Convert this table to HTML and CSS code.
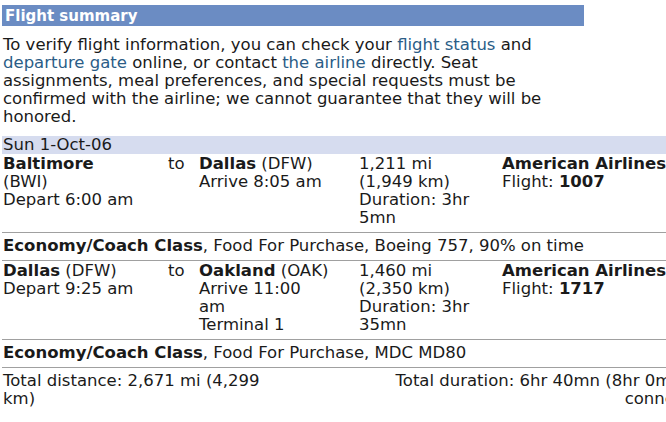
FILE: index.html
```html
<!DOCTYPE html>
<html>
<head>
<meta charset="utf-8">
<link rel="stylesheet" href="styles.css">
</head>
<body>
<div class="page">
  <h2 class="title">Flight summary</h2>
  <p class="intro">To verify flight information, you can check your <a href="#">flight status</a> and <a href="#">departure gate</a> online, or contact <a href="#">the airline</a> directly. Seat assignments, meal preferences, and special requests must be confirmed with the airline; we cannot guarantee that they will be honored.</p>
  <table class="flights">
    <colgroup>
      <col class="c-from"><col class="c-to"><col class="c-dest"><col class="c-dist"><col class="c-air">
    </colgroup>
    <tr class="date"><td colspan="5">Sun 1-Oct-06</td></tr>
    <tr class="leg">
      <td class="from"><b>Baltimore</b> (BWI)<br>Depart 6:00 am</td>
      <td class="to">to</td>
      <td class="dest"><b>Dallas</b> (DFW)<br>Arrive 8:05 am</td>
      <td class="dist">1,211 mi (1,949 km)<br>Duration: 3hr 5mn</td>
      <td class="air"><b>American Airlines</b><br>Flight: <b>1007</b></td>
    </tr>
    <tr class="info"><td colspan="5"><b>Economy/Coach Class</b>, Food For Purchase, Boeing 757, 90% on time</td></tr>
    <tr class="leg">
      <td class="from"><b>Dallas</b> (DFW)<br>Depart 9:25 am</td>
      <td class="to">to</td>
      <td class="dest"><b>Oakland</b> (OAK)<br>Arrive 11:00 am<br>Terminal 1</td>
      <td class="dist">1,460 mi (2,350 km)<br>Duration: 3hr 35mn</td>
      <td class="air"><b>American Airlines</b><br>Flight: <b>1717</b></td>
    </tr>
    <tr class="info"><td colspan="5"><b>Economy/Coach Class</b>, Food For Purchase, MDC MD80</td></tr>
  </table>
  <div class="totals">
    <div class="tdist">Total distance: 2,671 mi (4,299 km)</div>
    <div class="tdur">Total duration: 6hr 40mn (8hr 0mn with connection)</div>
  </div>
</div>
</body>
</html>
```
FILE: styles.css
```css
html, body {
  margin: 0;
  padding: 0;
  background: #fff;
}
body {
  font-family: "DejaVu Sans", Verdana, sans-serif;
  font-size: 16.5px;
  line-height: 18px;
  color: #1a1a1a;
  overflow: hidden;
}
.page {
  padding: 5px 0 0 2px;
  width: 760px;
}
.title {
  width: 579px;
  margin: 0;
  padding: 2px 0 0 3px;
  height: 19px;
  background: #6b8cc3;
  color: #fff;
  font-size: 15px;
  line-height: 18px;
  font-weight: bold;
}
.intro {
  margin: 10px 0 0 1px;
  width: 570px;
}
.intro a {
  color: #2b5d87;
  text-decoration: none;
}
.flights {
  margin-top: 10px;
  border-collapse: collapse;
  width: 730px;
  table-layout: fixed;
}
.c-from { width: 165px; }
.c-to { width: 32px; }
.c-dest { width: 159px; }
.c-dist { width: 144px; }
.c-air { width: 230px; }
.flights td {
  padding: 0 0 0 1px;
  vertical-align: top;
}
.flights td.from { padding-right: 28px; }
.flights td.dest { padding-left: 0; padding-right: 28px; }
.flights td.dist { padding-right: 26px; }
.flights td.air { padding-left: 0; }
.date td {
  background: #d6dcef;
}
.leg td {
  padding-top: 1px;
  padding-bottom: 5px;
  border-bottom: 1px solid #a0a0a0;
}
.info td {
  padding-top: 4px;
  padding-bottom: 5px;
  border-bottom: 1px solid #a0a0a0;
}
.totals {
  display: flex;
  justify-content: space-between;
  width: 719px;
  padding: 4px 0 0 1px;
}
.tdist {
  width: 290px;
}
.tdur {
  width: 360px;
  text-align: right;
}
```
